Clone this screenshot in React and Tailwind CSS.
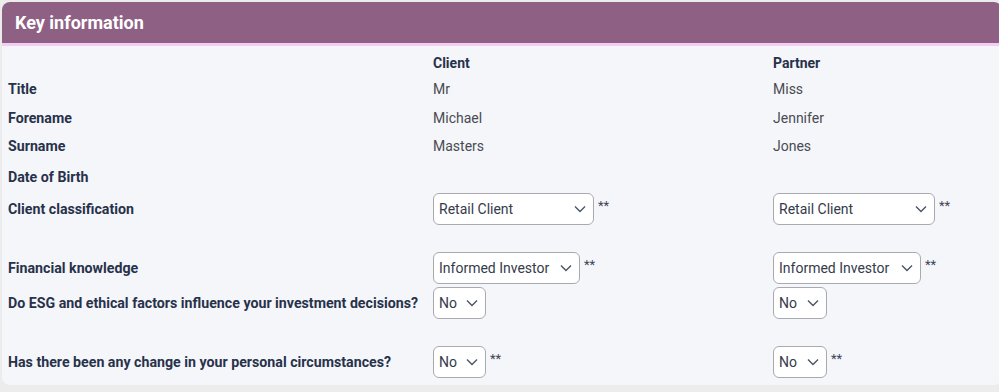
import React from "react";

const Chevron = () => (
  <svg width="12" height="8" viewBox="0 0 12 8" className="shrink-0">
    <path d="M1 1.5 L6 6.5 L11 1.5" fill="none" stroke="#4b5563" strokeWidth="1.4" />
  </svg>
);

function FakeSelect({ value, width, required }) {
  return (
    <div className="flex items-start">
      <div
        className="h-[32px] flex items-center justify-between pl-[5px] pr-[7px] bg-white border border-[#a9a9b0] rounded-[6px] text-[14px] text-[#353b4a]"
        style={{ width }}
      >
        <span>{value}</span>
        <Chevron />
      </div>
      {required && <span className="ml-[4px] mt-[6px] text-[13px] leading-[14px] text-[#3f4454]">**</span>}
    </div>
  );
}

function Row({ label, client, partner, className }) {
  return (
    <div className={"flex items-center " + className}>
      <div className="w-[425px] font-bold text-[14.2px] text-[#27324a]">{label}</div>
      <div className="w-[340px] text-[#484b52]">{client}</div>
      <div className="text-[#484b52]">{partner}</div>
    </div>
  );
}

export default function App() {
  return (
    <div className="w-[999px] h-[392px] bg-[#ececec] pt-[2px] pl-[2px] overflow-hidden" style={{ fontFamily: "Roboto, 'Liberation Sans', sans-serif" }}>
      <div className="w-[1000px] rounded-[8px] overflow-hidden bg-[#f5f6fa]">
        <div className="h-[41px] bg-[#8e6083] flex items-center px-[13px]">
          <h2 className="text-[18px] font-bold text-white leading-none">Key information</h2>
        </div>
        <div className="h-[3px] bg-[#f3cdf3]" />
        <div className="pl-[6px] pb-[7px] text-[14px] leading-[20px]">
          <Row className="h-[20px] mt-[7px]" label="" client={<span className="font-bold text-[#27324a]">Client</span>} partner={<span className="font-bold text-[#27324a]">Partner</span>} />
          <Row className="h-[20px] mt-[6px]" label="Title" client="Mr" partner="Miss" />
          <Row className="h-[20px] mt-[9px]" label="Forename" client="Michael" partner="Jennifer" />
          <Row className="h-[20px] mt-[8px]" label="Surname" client="Masters" partner="Jones" />
          <Row className="h-[20px] mt-[11px]" label="Date of Birth" client="" partner="" />
          <Row
            className="h-[32px] mt-[6px]"
            label="Client classification"
            client={<FakeSelect value="Retail Client" width={161} required />}
            partner={<FakeSelect value="Retail Client" width={162} required />}
          />
          <Row
            className="h-[32px] mt-[27px]"
            label="Financial knowledge"
            client={<FakeSelect value="Informed Investor" width={147} required />}
            partner={<FakeSelect value="Informed Investor" width={148} required />}
          />
          <Row
            className="h-[32px] mt-[3px]"
            label="Do ESG and ethical factors influence your investment decisions?"
            client={<FakeSelect value="No" width={53} />}
            partner={<FakeSelect value="No" width={54} />}
          />
          <Row
            className="h-[32px] mt-[27px]"
            label="Has there been any change in your personal circumstances?"
            client={<FakeSelect value="No" width={53} required />}
            partner={<FakeSelect value="No" width={54} required />}
          />
        </div>
      </div>
    </div>
  );
}
